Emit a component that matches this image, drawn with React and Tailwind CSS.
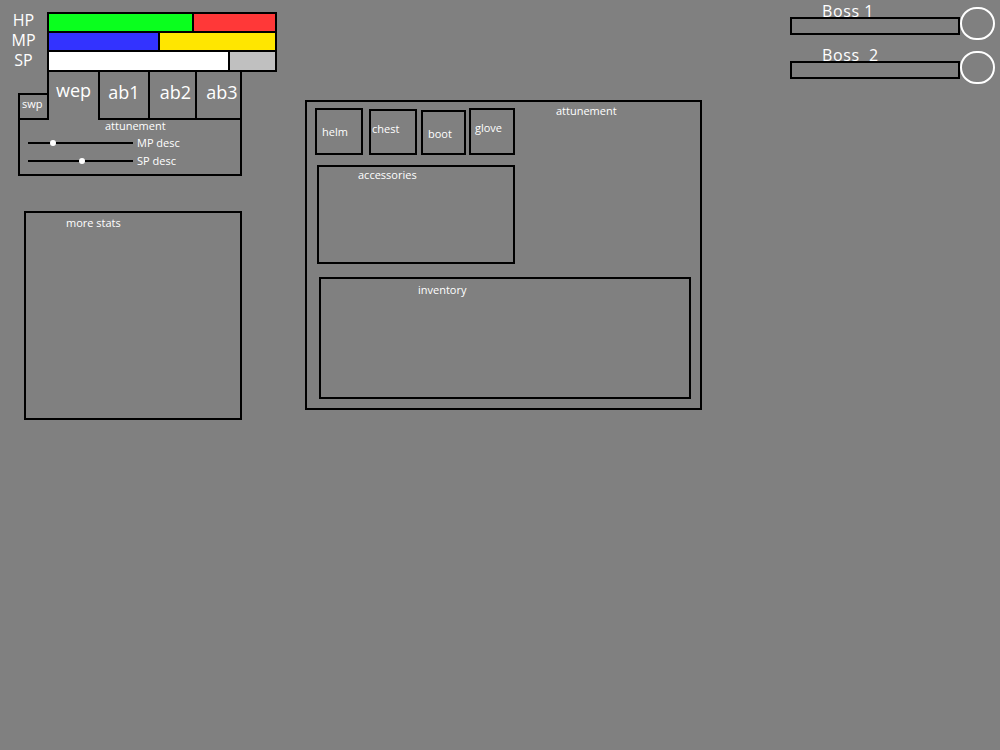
import React from "react";

function StatBars() {
  return (
    <div className="flex">
      {/* Labels */}
      <div className="w-[47px] pt-[10px] text-[16px] leading-[20px]">
        <div className="h-[20px] flex items-center justify-center">HP</div>
        <div className="h-[20px] flex items-center justify-center">MP</div>
        <div className="h-[20px] flex items-center justify-center">SP</div>
      </div>
      {/* Bars */}
      <div className="mt-[12px] w-[230px] border-2 border-black flex flex-col">
        <div className="flex h-[17px]">
          <div className="w-[143px] bg-[#0aff1e]" />
          <div className="flex-1 border-l-2 border-black bg-[#ff3838]" />
        </div>
        <div className="flex h-[19px] border-t-2 border-black">
          <div className="w-[109px] bg-[#3333ff]" />
          <div className="flex-1 border-l-2 border-black bg-[#ffe600]" />
        </div>
        <div className="flex h-[20px] border-t-2 border-black">
          <div className="w-[179px] bg-white" />
          <div className="flex-1 border-l-2 border-black bg-[#c0c0c0]" />
        </div>
      </div>
    </div>
  );
}

function Slider({ dot, label, className }) {
  return (
    <div className={`flex items-center h-[18px] ${className || ""}`}>
      <div className="relative w-[105px] h-[2px] bg-black">
        <div
          className="absolute top-[-2px] w-[6px] h-[6px] rounded-full bg-white"
          style={{ left: dot }}
        />
      </div>
      <span className="ml-[4px] mb-[2px] text-[11px] leading-[11px]">{label}</span>
    </div>
  );
}

function AbilityTabs() {
  return (
    <div className="ml-[18px] w-[224px]">
      {/* Tab row */}
      <div className="flex items-end h-[48px]">
        <div className="w-[29px] h-[27px] border-l-2 border-t-2 border-b-2 border-black pl-[2px] pt-[3px] text-[11px] leading-[11px]">
          swp
        </div>
        <div className="w-[51px] h-full border-l-2 border-black pt-[9px] text-center text-[18px] leading-[18px]">
          wep
        </div>
        <div className="w-[50px] h-full border-l-2 border-b-2 border-black pt-[11px] text-center text-[18px] leading-[18px]">
          ab1
        </div>
        <div className="w-[47px] h-full border-l-2 border-b-2 border-black pt-[11px] pl-[6px] text-center text-[18px] leading-[18px]">
          ab2
        </div>
        <div className="w-[47px] h-full border-l-2 border-r-2 border-b-2 border-black pt-[11px] pl-[7px] text-center text-[18px] leading-[18px]">
          ab3
        </div>
      </div>
      {/* Attunement sliders */}
      <div className="h-[56px] border-l-2 border-r-2 border-b-2 border-black pl-[8px]">
        <div className="pl-[77px] text-[11px] leading-[11px]">attunement</div>
        <Slider dot={22} label="MP desc" className="mt-[3px]" />
        <Slider dot={51} label="SP desc" />
      </div>
    </div>
  );
}

function LeftColumn() {
  return (
    <div className="w-[290px] shrink-0">
      <StatBars />
      <AbilityTabs />
      <div className="ml-[24px] mt-[35px] w-[218px] h-[209px] border-2 border-black pl-[40px] pt-[4px] text-[11px] leading-[11px]">
        more stats
      </div>
    </div>
  );
}

function EquipPanel() {
  return (
    <div className="ml-[15px] mt-[100px] w-[397px] h-[310px] shrink-0 border-2 border-black text-[11px] leading-[11px]">
      {/* Gear slots */}
      <div className="flex items-end pl-[8px] pt-[6px]">
        <div className="w-[48px] h-[47px] border-2 border-black pl-[5px] pt-[16px]">helm</div>
        <div className="ml-[6px] w-[48px] h-[46px] border-2 border-black pl-[1px] pt-[12px]">chest</div>
        <div className="ml-[4px] w-[45px] h-[45px] border-2 border-black pl-[5px] pt-[16px]">boot</div>
        <div className="ml-[3px] w-[46px] h-[47px] border-2 border-black pl-[4px] pt-[12px]">glove</div>
        <div className="self-start ml-[41px] -mt-[3px]">attunement</div>
      </div>
      {/* Accessories */}
      <div className="ml-[10px] mt-[10px] w-[198px] h-[99px] border-2 border-black pl-[39px] pt-[2px]">
        accessories
      </div>
      {/* Inventory */}
      <div className="ml-[12px] mt-[13px] w-[372px] h-[122px] border-2 border-black pl-[97px] pt-[5px]">
        inventory
      </div>
    </div>
  );
}

function BossRow({ name, className }) {
  return (
    <div className={`flex items-start ${className || ""}`}>
      <div className="w-[170px]">
        <div className="h-[14px] pl-[32px] text-[16px] leading-[16px] tracking-[0.6px] whitespace-pre">
          {name}
        </div>
        <div className="h-[18px] border-2 border-black" />
      </div>
      <div className="mt-[4px] w-[35px] h-[33px] rounded-full border-2 border-white" />
    </div>
  );
}

function BossList() {
  return (
    <div className="ml-auto mr-[5px] w-[205px] shrink-0 pt-[3px]">
      <BossRow name="Boss 1" />
      <BossRow name="Boss  2" className="mt-[7px]" />
    </div>
  );
}

export default function App() {
  return (
    <div className="w-[1000px] h-[750px] bg-[#808080] flex items-start overflow-hidden text-white font-['Open_Sans',sans-serif]">
      <LeftColumn />
      <EquipPanel />
      <BossList />
    </div>
  );
}
